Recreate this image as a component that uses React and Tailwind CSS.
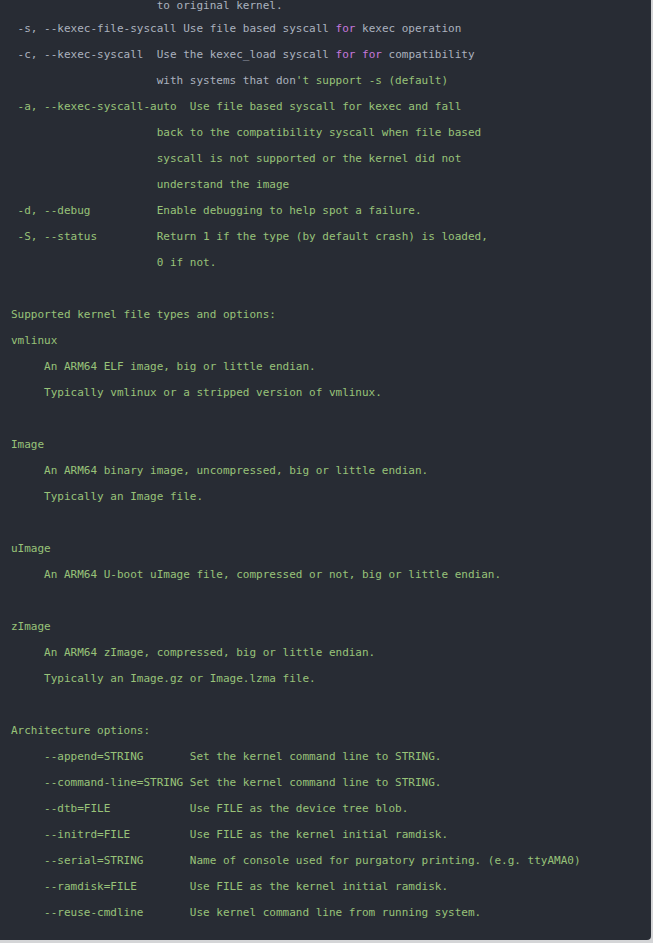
const grey = 'text-[#abb2bf]'
const green = 'text-[#98c379]'
const purple = 'text-[#c678dd]'

const pad = '                      '

const tail = [
  pad + 'back to the compatibility syscall when file based',
  pad + 'syscall is not supported or the kernel did not',
  pad + 'understand the image',
  ' -d, --debug          Enable debugging to help spot a failure.',
  ' -S, --status         Return 1 if the type (by default crash) is loaded,',
  pad + '0 if not.',
  '',
  'Supported kernel file types and options:',
  'vmlinux',
  '     An ARM64 ELF image, big or little endian.',
  '     Typically vmlinux or a stripped version of vmlinux.',
  '',
  'Image',
  '     An ARM64 binary image, uncompressed, big or little endian.',
  '     Typically an Image file.',
  '',
  'uImage',
  '     An ARM64 U-boot uImage file, compressed or not, big or little endian.',
  '',
  'zImage',
  '     An ARM64 zImage, compressed, big or little endian.',
  '     Typically an Image.gz or Image.lzma file.',
  '',
  'Architecture options:',
  '     --append=STRING       Set the kernel command line to STRING.',
  '     --command-line=STRING Set the kernel command line to STRING.',
  '     --dtb=FILE            Use FILE as the device tree blob.',
  '     --initrd=FILE         Use FILE as the kernel initial ramdisk.',
  '     --serial=STRING       Name of console used for purgatory printing. (e.g. ttyAMA0)',
  '     --ramdisk=FILE        Use FILE as the kernel initial ramdisk.',
  '     --reuse-cmdline       Use kernel command line from running system.',
]

function Line({ children }) {
  return <div className="h-[26px] leading-[26px]">{children || ' '}</div>
}

export default function App() {
  return (
    <div className="w-[653px] h-[943px] overflow-hidden bg-[#d4d5d7]">
      <div className="w-[651px] h-[940px] overflow-hidden rounded-br-[4px] bg-[#282c34]">
        <pre
          className={`whitespace-pre pl-[11px] text-[11px] ${grey}`}
          style={{ fontFamily: '"DejaVu Sans Mono", "Liberation Mono", monospace' }}
        >
          <div className="h-[20px] leading-[20px] -mt-[4px]">{pad}to original kernel.</div>
          <Line>
            {' -s, --kexec-file-syscall Use file based syscall '}
            <span className={purple}>for</span>
            {' kexec operation'}
          </Line>
          <Line>
            {' -c, --kexec-syscall  Use the kexec_load syscall '}
            <span className={purple}>for</span> <span className={purple}>for</span>
            {' compatibility'}
          </Line>
          <Line>
            {pad + 'with systems that don'}
            <span className={green}>'t support -s (default)</span>
          </Line>
          <div className={green}>
            <Line>{' -a, --kexec-syscall-auto  Use file based syscall for kexec and fall'}</Line>
            {tail.map((t, i) => (
              <Line key={i}>{t}</Line>
            ))}
          </div>
        </pre>
      </div>
    </div>
  )
}
